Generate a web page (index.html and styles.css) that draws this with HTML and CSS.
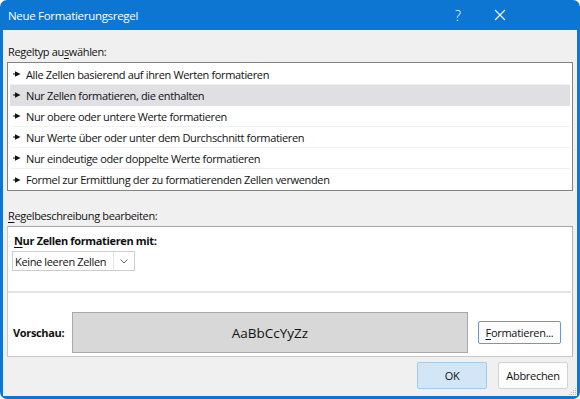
FILE: index.html
```html
<!DOCTYPE html>
<html lang="de">
<head>
<meta charset="utf-8">
<title>Neue Formatierungsregel</title>
<link rel="stylesheet" href="styles.css">
</head>
<body>
<div class="window">
  <div class="titlebar">
    <span class="title">Neue Formatierungsregel</span>
    <span class="help">?</span>
    <span class="close"><svg width="12" height="12" viewBox="0 0 12 12"><path d="M1 1 L11 11 M11 1 L1 11" stroke="#fff" stroke-width="1.1" fill="none"/></svg></span>
  </div>
  <div class="content">
    <div class="label">Regeltyp au<u>s</u>wählen:</div>
    <ul class="list">
      <li><svg class="arrow" width="8" height="6" viewBox="0 0 8 6"><path d="M0 2.6 H3 V3.4 H0 Z M2 0.3 L7.5 3 L2 5.7 Z" fill="#111"/></svg>Alle Zellen basierend auf ihren Werten formatieren</li>
      <li class="sel"><svg class="arrow" width="8" height="6" viewBox="0 0 8 6"><path d="M0 2.6 H3 V3.4 H0 Z M2 0.3 L7.5 3 L2 5.7 Z" fill="#111"/></svg>Nur Zellen formatieren, die enthalten</li>
      <li><svg class="arrow" width="8" height="6" viewBox="0 0 8 6"><path d="M0 2.6 H3 V3.4 H0 Z M2 0.3 L7.5 3 L2 5.7 Z" fill="#111"/></svg>Nur obere oder untere Werte formatieren</li>
      <li><svg class="arrow" width="8" height="6" viewBox="0 0 8 6"><path d="M0 2.6 H3 V3.4 H0 Z M2 0.3 L7.5 3 L2 5.7 Z" fill="#111"/></svg>Nur Werte über oder unter dem Durchschnitt formatieren</li>
      <li><svg class="arrow" width="8" height="6" viewBox="0 0 8 6"><path d="M0 2.6 H3 V3.4 H0 Z M2 0.3 L7.5 3 L2 5.7 Z" fill="#111"/></svg>Nur eindeutige oder doppelte Werte formatieren</li>
      <li class="last"><svg class="arrow" width="8" height="6" viewBox="0 0 8 6"><path d="M0 2.6 H3 V3.4 H0 Z M2 0.3 L7.5 3 L2 5.7 Z" fill="#111"/></svg>Formel zur Ermittlung der zu formatierenden Zellen verwenden</li>
    </ul>
    <div class="label label2"><u>R</u>egelbeschreibung bearbeiten:</div>
    <div class="desc">
      <div class="desc-top">
        <div class="bold"><u>N</u>ur Zellen formatieren mit:</div>
        <div class="select">
          <span class="select-text">Keine leeren Zellen</span>
          <span class="chev"><svg width="8" height="5" viewBox="0 0 8 5"><path d="M0.5 0.5 L4 4 L7.5 0.5" stroke="#666" stroke-width="1" fill="none"/></svg></span>
        </div>
      </div>
      <div class="preview-row">
        <span class="bold preview-label">Vorschau:</span>
        <div class="preview">AaBbCcYyZz</div>
        <button class="btn fmt"><u>F</u>ormatieren...</button>
      </div>
    </div>
    <div class="actions">
      <button class="btn ok">OK</button>
      <button class="btn cancel">Abbrechen</button>
    </div>
  </div>
  <svg class="grip" width="8" height="8" viewBox="0 0 8 8"><g fill="#b8b8b8"><rect x="6" y="0" width="1" height="1"/><rect x="4" y="2" width="1" height="1"/><rect x="6" y="2" width="1" height="1"/><rect x="2" y="4" width="1" height="1"/><rect x="4" y="4" width="1" height="1"/><rect x="6" y="4" width="1" height="1"/><rect x="0" y="6" width="1" height="1"/><rect x="2" y="6" width="1" height="1"/><rect x="4" y="6" width="1" height="1"/><rect x="6" y="6" width="1" height="1"/></g></svg>
</div>
</body>
</html>
```

FILE: styles.css
```css
* { box-sizing: border-box; }
html, body {
  margin: 0;
  padding: 0;
  background: #ffffff;
}
body {
  font-family: "Open Sans", "Noto Sans", "Liberation Sans", sans-serif;
  font-size: 11px;
  letter-spacing: -0.35px;
  color: #111;
}
u { text-decoration: underline; text-underline-offset: 2px; }
.window {
  position: relative;
  width: 580px;
  height: 399px;
  background: #0c76d2;
  border-radius: 7px;
  padding: 0 3px 3px 3px;
  display: flex;
  flex-direction: column;
  overflow: hidden;
}
.titlebar {
  height: 30px;
  display: flex;
  align-items: center;
  color: #fff;
  padding-left: 5px;
  flex: none;
}
.title {
  font-size: 11.5px;
  letter-spacing: -0.3px;
  flex: 1;
}
.help {
  font-size: 14px;
  width: 12px;
  margin-right: 27px;
  font-weight: 300;
  letter-spacing: 0;
}
.close {
  width: 12px;
  height: 12px;
  margin-right: 71px;
  display: flex;
}
.content {
  flex: 1;
  background: #f0f0f0;
  padding: 15px 4px 0 4px;
  display: flex;
  flex-direction: column;
}
.label {
  line-height: 14px;
  height: 14px;
  padding-left: 1px;
}
.list {
  list-style: none;
  margin: 3px 0 0 0;
  padding: 1px 2px 0 2px;
  background: #fff;
  border: 1px solid #838383;
  height: 129px;
}
.list li {
  height: 21px;
  display: flex;
  align-items: center;
  padding-left: 3px;
  border-bottom: 1px solid #f1f1f1;
}
.list li.sel { background: #dfdfe4; border-bottom-color: #dfdfe4; }
.list li.last { border-bottom: none; }
.arrow { margin-right: 5px; flex: none; }
.label2 { margin-top: 18px; }
.desc {
  margin-top: 3px;
  background: #fff;
  border: 1px solid #c9c9c9;
  border-top-color: #a5a5a5;
  border-right-color: #b5b5b5;
  height: 131px;
}
.desc-top {
  padding: 7px 0 20px 4px;
  border-bottom: 2px solid #e4e4e4;
  margin-right: 1px;
}
.bold { font-weight: 700; line-height: 14px; height: 14px; }
.desc-top .bold { padding-left: 2px; }
.select {
  margin-top: 3px;
  width: 123px;
  height: 20px;
  border: 1px solid #cdcdcd;
  display: flex;
  align-items: stretch;
  background: #fff;
}
.select-text {
  flex: 1;
  display: flex;
  align-items: center;
  padding-left: 2px;
}
.chev {
  width: 21px;
  border-left: 1px solid #e3e3e3;
  display: flex;
  align-items: center;
  justify-content: center;
}
.preview-row {
  display: flex;
  align-items: center;
  padding: 19px 0 0 5px;
}
.preview-label { width: 59px; }
.preview {
  width: 396px;
  height: 41px;
  background: #d8d8d8;
  border: 1px solid #a8a8a8;
  display: flex;
  align-items: center;
  justify-content: center;
  font-size: 13.5px;
  letter-spacing: 0;
}
.btn {
  font-family: inherit;
  font-size: 11px;
  letter-spacing: -0.3px;
  color: #111;
  background: #fdfdfd;
  border: 1px solid #d3d3d3;
  border-radius: 2px;
  padding: 0;
}
.fmt {
  margin-left: 10px;
  width: 83px;
  height: 23px;
  border-color: #5f9bd6;
}
.actions {
  display: flex;
  justify-content: flex-end;
  gap: 11px;
  padding: 5px 5px 0 0;
}
.ok, .cancel { width: 70px; height: 27px; }
.ok { background: #d3e6f8; border-color: #a6c9ea; }
.grip { position: absolute; right: 3px; bottom: 3px; }
```
